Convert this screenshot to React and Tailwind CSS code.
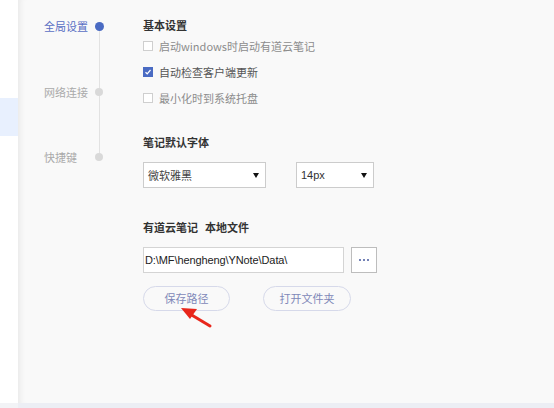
import React from 'react';

const cjk = { fontFamily: '"Noto Sans CJK SC", "Noto Sans", sans-serif' };
const latin = { fontFamily: '"Liberation Sans", "Noto Sans CJK SC", sans-serif' };

function Caret() {
  return (
    <svg width="6" height="5" viewBox="0 0 6 5">
      <polygon points="0,0 6,0 3,5" fill="#111" />
    </svg>
  );
}

function Check({ checked, label }) {
  return (
    <div className="h-[26px] flex items-center gap-[6px]">
      {checked ? (
        <div className="w-[10px] h-[10px] bg-[#4a6bc3] flex items-center justify-center">
          <svg width="8" height="8" viewBox="0 0 8 8">
            <path d="M1.5 4.2 L3.2 5.8 L6.5 2" stroke="#fff" strokeWidth="1.2" fill="none" />
          </svg>
        </div>
      ) : (
        <div className="w-[10px] h-[10px] border border-[#cfcfcf] bg-white" />
      )}
      <span className={`text-[11px] leading-none ${checked ? 'text-[#555]' : 'text-[#8c8c8c]'}`}>{label}</span>
    </div>
  );
}

function NavItem({ label, active, className }) {
  return (
    <div className={`h-[16px] flex items-center ${className || ''}`}>
      <span className={`w-[50px] text-[11px] leading-none ${active ? 'text-[#5a6fc4]' : 'text-[#aaa]'}`}>{label}</span>
      <div className="w-[10px] flex justify-center relative z-10">
        {active ? (
          <div className="w-[9px] h-[9px] rounded-full bg-[#4a6bc3]" />
        ) : (
          <div className="w-[8px] h-[8px] rounded-full bg-[#d9d9d9]" />
        )}
      </div>
    </div>
  );
}

export default function App() {
  return (
    <div className="w-[554px] h-[408px] flex flex-col bg-white overflow-hidden" style={cjk}>
      <div className="flex-1 flex">
        {/* left strip */}
        <div className="w-[18px] bg-white pt-[98px]">
          <div className="h-[38px] bg-[#e8f0fe]" />
        </div>

        {/* settings panel */}
        <div className="flex-1 flex bg-[#f9f9f9] shadow-[inset_7px_0_6px_-5px_rgba(0,0,0,0.07)] relative">
          {/* nav */}
          <div className="w-[125px] pl-[26px] pt-[18px] relative">
            <div className="absolute left-[80.5px] top-[26px] w-px h-[131px] bg-[#e2e2e2]" />
            <NavItem label="全局设置" active />
            <NavItem label="网络连接" className="mt-[50px]" />
            <NavItem label="快捷键" className="mt-[49px]" />
          </div>

          {/* content */}
          <div className="flex-1 pt-[17px] flex flex-col items-start">
            <div className="h-[16px] flex items-center text-[11px] font-bold text-[#333]">基本设置</div>
            <Check label="启动windows时启动有道云笔记" />
            <Check label="自动检查客户端更新" checked />
            <Check label="最小化时到系统托盘" />

            <div className="h-[16px] mt-[23px] flex items-center text-[11px] font-bold text-[#333]">笔记默认字体</div>
            <div className="mt-[12px] flex gap-[30px]">
              <div className="w-[123px] h-[26px] border border-[#cccccc] bg-white flex items-center justify-between pl-[4px] pr-[6px]">
                <span className="text-[11px] text-[#444] leading-none">微软雅黑</span>
                <Caret />
              </div>
              <div className="w-[78px] h-[26px] border border-[#cccccc] bg-white flex items-center justify-between pl-[4px] pr-[6px]">
                <span className="text-[11px] text-[#333] leading-none" style={latin}>14px</span>
                <Caret />
              </div>
            </div>

            <div className="h-[16px] mt-[31px] flex items-center gap-[7px] text-[11px] font-bold text-[#333]">
              <span>有道云笔记</span>
              <span>本地文件</span>
            </div>
            <div className="mt-[12px] flex gap-[7px]">
              <div className="w-[201px] h-[26px] border border-[#d4d4d4] bg-white flex items-center pl-[1px]">
                <span className="text-[11px] text-[#222] leading-none tracking-[-0.1px]" style={latin}>D:\MF\hengheng\YNote\Data\</span>
              </div>
              <div className="w-[26px] h-[26px] border border-[#bdbdbd] bg-white flex items-center justify-center gap-[2px]">
                <div className="w-[2px] h-[2px] bg-[#7482b6]" />
                <div className="w-[2px] h-[2px] bg-[#7482b6]" />
                <div className="w-[2px] h-[2px] bg-[#7482b6]" />
              </div>
            </div>

            <div className="mt-[13px] flex gap-[33px]">
              <button className="w-[87px] h-[25px] rounded-full border border-[#d6d9ea] text-[11px] text-[#7f88b8] leading-none">保存路径</button>
              <button className="w-[88px] h-[25px] rounded-full border border-[#d6d9ea] text-[11px] text-[#7f88b8] leading-none">打开文件夹</button>
            </div>
          </div>

          {/* red annotation arrow */}
          <svg className="absolute left-[142px] top-[300px]" width="56" height="32" viewBox="0 0 56 32">
            <line x1="30" y1="14" x2="50" y2="26" stroke="#e8261b" strokeWidth="3" strokeLinecap="round" />
            <polygon points="21,8 37,9 30,19" fill="#e8261b" />
          </svg>
        </div>
      </div>
      <div className="h-[5px] flex">
        <div className="w-[18px] bg-[#f2f3f6]" />
        <div className="flex-1 bg-[#eceef4]" />
      </div>
    </div>
  );
}
